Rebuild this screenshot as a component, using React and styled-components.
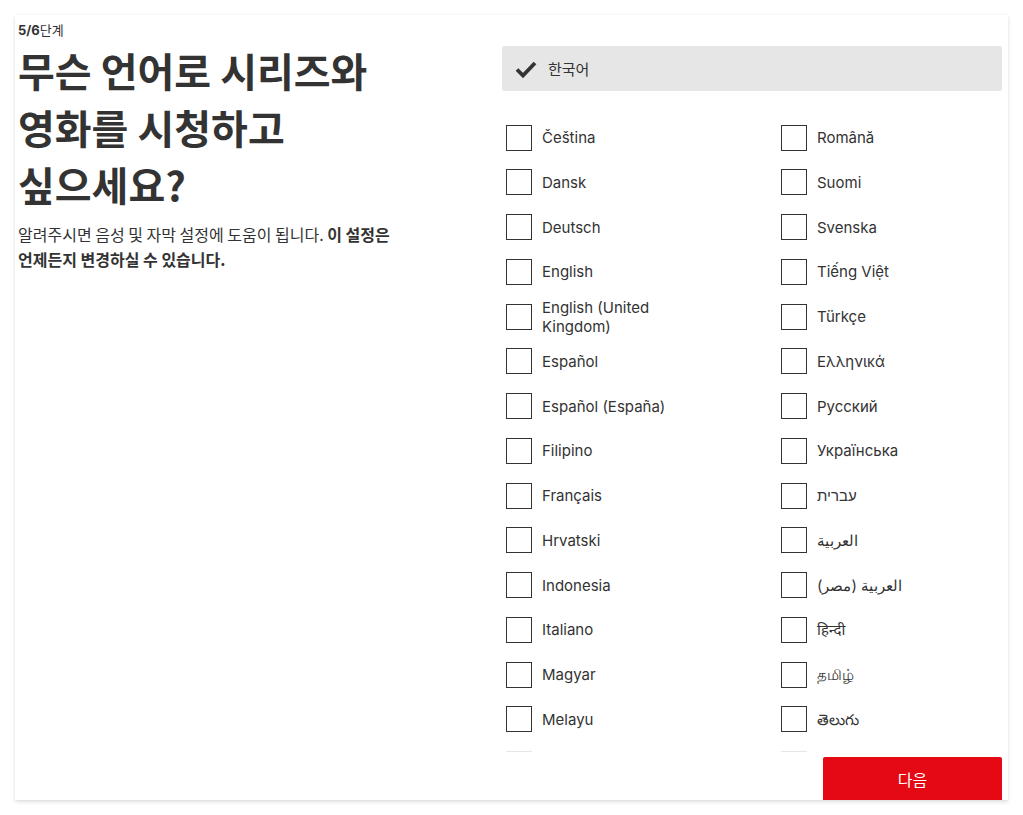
import styled, { createGlobalStyle } from 'styled-components'

const GlobalStyle = createGlobalStyle`
  html, body {
    margin: 0;
    padding: 0;
    background: #fff;
  }
  body {
    font-family: Inter, "Noto Sans", "Noto Sans CJK KR", sans-serif;
    color: #333;
  }
`

const leftLangs = [
  'Čeština',
  'Dansk',
  'Deutsch',
  'English',
  'English (United Kingdom)',
  'Español',
  'Español (España)',
  'Filipino',
  'Français',
  'Hrvatski',
  'Indonesia',
  'Italiano',
  'Magyar',
  'Melayu',
  'Nederlands',
  'Norsk bokmål',
  'Polski',
  'Português',
  'Português (Brasil)',
]

const rightLangs = [
  'Română',
  'Suomi',
  'Svenska',
  'Tiếng Việt',
  'Türkçe',
  'Ελληνικά',
  'Русский',
  'Українська',
  { label: 'עברית', rtl: true },
  { label: 'العربية', rtl: true },
  { label: 'العربية (مصر)', rtl: true },
  'हिन्दी',
  'தமிழ்',
  'తెలుగు',
  'ไทย',
  '中文(简体)',
  '中文(繁體)',
  '日本語',
]

export default function App() {
  return (
    <>
      <GlobalStyle />
      <Page>
        <Card>
          <Intro>
            <Step>
              <b>5/6</b>단계
            </Step>
            <Title>무슨 언어로 시리즈와 영화를 시청하고 싶으세요?</Title>
            <Lead>
              알려주시면 음성 및 자막 설정에 도움이 됩니다. <b>이 설정은 언제든지 변경하실 수 있습니다.</b>
            </Lead>
          </Intro>

          <Picker>
            <Selected>
              <svg width="22" height="18" viewBox="0 0 22 18">
                <path d="M2 9.5 L8 15.5 L20 3" fill="none" stroke="#333" strokeWidth="3.8" />
              </svg>
              <span>한국어</span>
            </Selected>

            <ListWrap>
              <List>
                <Column>
                  {leftLangs.map((l) => (
                    <LangOption key={l} lang={l} />
                  ))}
                </Column>
                <Column>
                  {rightLangs.map((l) => {
                    const item = typeof l === 'string' ? { label: l } : l
                    return <LangOption key={item.label} lang={item.label} rtl={item.rtl} />
                  })}
                </Column>
              </List>
            </ListWrap>

            <Footer>
              <NextButton>다음</NextButton>
            </Footer>
          </Picker>
        </Card>
      </Page>
    </>
  )
}

function LangOption({ lang, rtl }) {
  return (
    <Option>
      <Box />
      <Label dir={rtl ? 'rtl' : undefined}>{lang}</Label>
    </Option>
  )
}

const Page = styled.div`
  padding: 15px;
  height: 815px;
  box-sizing: border-box;
`

const Card = styled.div`
  height: 785px;
  box-sizing: border-box;
  background: #fff;
  box-shadow: 0 2px 4px rgba(0, 0, 0, 0.12), 0 0 2px rgba(0, 0, 0, 0.06);
  display: grid;
  grid-template-columns: 484px 500px;
  padding: 0 6px 0 3px;
`

const Intro = styled.div`
  padding-top: 6px;
  width: 400px;
  word-break: keep-all;
`

const Step = styled.div`
  font-size: 13px;
  line-height: 18px;
  color: #333;
  b {
    font-weight: 700;
  }
`

const Title = styled.h1`
  margin: 3px 0 0;
  font-family: "Noto Sans CJK KR", Inter, sans-serif;
  font-size: 40px;
  line-height: 57px;
  font-weight: 700;
  color: #333;
`

const Lead = styled.p`
  margin: 9px 0 0;
  font-family: "Noto Sans CJK KR", sans-serif;
  font-size: 16px;
  line-height: 25px;
  color: #333;
  b {
    font-weight: 700;
  }
`

const Picker = styled.div`
  display: flex;
  flex-direction: column;
  padding-top: 31px;
  min-height: 0;
`

const Selected = styled.div`
  height: 45px;
  flex: none;
  display: flex;
  align-items: center;
  gap: 11px;
  padding-left: 13px;
  background: #e6e6e6;
  border-radius: 3px;
  font-family: "Noto Sans CJK KR", sans-serif;
  font-size: 15px;
  color: #333;
`

const ListWrap = styled.div`
  position: relative;
  flex: 1;
  min-height: 0;
  margin-top: 24.3px;
  overflow: hidden;

  &::after {
    content: '';
    position: absolute;
    left: 0;
    right: 0;
    bottom: 0;
    height: 10px;
    background: rgba(255, 255, 255, 0.88);
  }
`

const List = styled.div`
  display: grid;
  grid-template-columns: 275px 275px;
  padding-left: 4px;
`

const Column = styled.div`
  display: flex;
  flex-direction: column;
`

const Option = styled.div`
  height: 44.75px;
  display: flex;
  align-items: center;
  gap: 10px;
`

const Box = styled.div`
  width: 26px;
  height: 26px;
  flex: none;
  box-sizing: border-box;
  border: 1px solid #333;
  background: #fff;
`

const Label = styled.span`
  max-width: 150px;
  font-size: 15px;
  line-height: 19px;
  color: #333;
  text-align: left;
`

const Footer = styled.div`
  flex: none;
  display: flex;
  justify-content: flex-end;
  margin-top: 5px;
`

const NextButton = styled.button`
  width: 179px;
  height: 43px;
  border: none;
  border-radius: 2px 2px 0 0;
  background: #e50914;
  color: #fff;
  font-family: "Noto Sans CJK KR", sans-serif;
  font-size: 16px;
  cursor: pointer;
`
